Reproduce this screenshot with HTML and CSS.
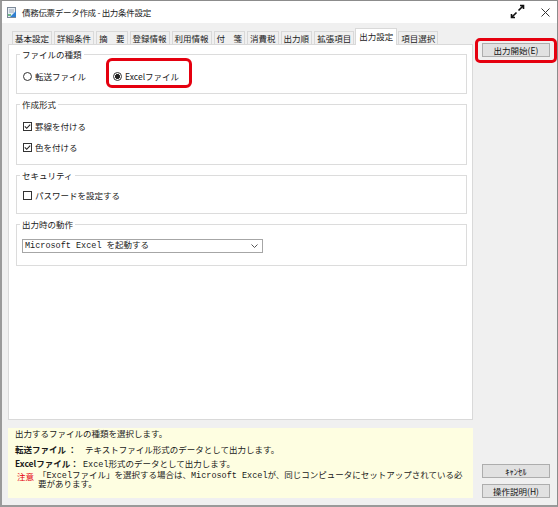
FILE: index.html
```html
<!DOCTYPE html>
<html lang="ja">
<head>
<meta charset="utf-8">
<title>債務伝票データ作成 - 出力条件設定</title>
<link rel="stylesheet" href="styles.css">
</head>
<body>
<div class="window">
  <header class="titlebar">
    <svg class="app-icon" viewBox="0 0 10 11" width="10" height="11">
      <rect x="0.5" y="0.5" width="8" height="10" fill="#e8eef5" stroke="#7d8a99"/>
      <path d="M2 3 L7 3 M2 5 L7 5" stroke="#9aa7b5" stroke-width="1"/>
      <path d="M3 10 L9 4 L9 10 Z" fill="#2f7fd0"/>
      <path d="M1 8 L4 8" stroke="#3aa35a" stroke-width="1.4"/>
    </svg>
    <span class="title">債務伝票データ作成 - 出力条件設定</span>
    <svg class="maximize" viewBox="0 0 15 15" width="15" height="15">
      <path d="M8.5 6.5 L13.5 1.5 M10 1.5 L13.5 1.5 L13.5 5 M6.5 8.5 L1.5 13.5 M1.5 10 L1.5 13.5 L5 13.5" fill="none" stroke="#111" stroke-width="1.6"/>
    </svg>
    <svg class="close" viewBox="0 0 9 9" width="9" height="9">
      <path d="M0.5 0.5 L8.5 8.5 M8.5 0.5 L0.5 8.5" stroke="#333" stroke-width="1"/>
    </svg>
  </header>

  <div class="client">
    <div class="main">
      <ul class="tabs">
        <li class="tab">基本設定</li>
        <li class="tab">詳細条件</li>
        <li class="tab">摘　要</li>
        <li class="tab">登録情報</li>
        <li class="tab">利用情報</li>
        <li class="tab">付　箋</li>
        <li class="tab">消費税</li>
        <li class="tab">出力順</li>
        <li class="tab">拡張項目</li>
        <li class="tab tab-active">出力設定</li>
        <li class="tab">項目選択</li>
      </ul>

      <div class="panel">
        <fieldset class="group group-type">
          <legend>ファイルの種類</legend>
          <div class="radio-row">
            <label class="opt"><span class="radio"></span>転送ファイル</label>
            <label class="opt highlight-radio"><span class="radio radio-checked"></span>Excelファイル</label>
          </div>
        </fieldset>

        <fieldset class="group group-format">
          <legend>作成形式</legend>
          <div class="check-list">
            <label class="opt">
              <svg class="check" viewBox="0 0 9 9" width="9" height="9"><rect x="0.5" y="0.5" width="8" height="8" fill="#fff" stroke="#333"/><path d="M1.8 4.4 L3.7 6.3 L7.2 2.6" fill="none" stroke="#222" stroke-width="1.1"/></svg>罫線を付ける
            </label>
            <label class="opt">
              <svg class="check" viewBox="0 0 9 9" width="9" height="9"><rect x="0.5" y="0.5" width="8" height="8" fill="#fff" stroke="#333"/><path d="M1.8 4.4 L3.7 6.3 L7.2 2.6" fill="none" stroke="#222" stroke-width="1.1"/></svg>色を付ける
            </label>
          </div>
        </fieldset>

        <fieldset class="group group-security">
          <legend>セキュリティ</legend>
          <label class="opt">
            <svg class="check" viewBox="0 0 9 9" width="9" height="9"><rect x="0.5" y="0.5" width="8" height="8" fill="#fff" stroke="#333"/></svg>パスワードを設定する
          </label>
        </fieldset>

        <fieldset class="group group-action">
          <legend>出力時の動作</legend>
          <div class="select">
            <span class="select-text">Microsoft Excel を起動する</span>
            <svg class="chevron" viewBox="0 0 7 4" width="7" height="4"><path d="M0.5 0.5 L3.5 3.5 L6.5 0.5" fill="none" stroke="#555" stroke-width="1"/></svg>
          </div>
        </fieldset>
      </div>

      <div class="info">
        <div class="info-line">出力するファイルの種類を選択します。</div>
        <div class="info-line"><span class="info-label label-transfer">転送ファイル ：</span>テキストファイル形式のデータとして出力します。</div>
        <div class="info-line"><span class="info-label label-excel">Excelファイル：</span>Excel形式のデータとして出力します。</div>
        <div class="info-note">
          <span class="note-label">注意</span>
          <span class="note-text">「Excelファイル」を選択する場合は、Microsoft Excelが、同じコンピュータにセットアップされている必<br>要があります。</span>
        </div>
      </div>
    </div>

    <div class="side">
      <button class="btn btn-highlight">出力開始(E)</button>
      <div class="side-bottom">
        <button class="btn">ｷｬﾝｾﾙ</button>
        <button class="btn">操作説明(H)</button>
      </div>
    </div>
  </div>
</div>
</body>
</html>
```

FILE: styles.css
```css
* { box-sizing: border-box; }

html, body {
  margin: 0;
  padding: 0;
}

body {
  width: 558px;
  height: 507px;
  overflow: hidden;
  background: #ffffff;
  font-family: "Noto Sans CJK JP", sans-serif;
  font-size: 9px;
  color: #1a1a1a;
}

.window {
  width: 558px;
  height: 507px;
  border: 1px solid #8c8c8c;
  border-left: 2px solid #9a9a9a;
  border-bottom: 2px solid #9a9a9a;
  background: #f0f0f0;
  display: flex;
  flex-direction: column;
}

/* ---------- title bar ---------- */
.titlebar {
  height: 22px;
  flex: none;
  background: #ffffff;
  display: flex;
  align-items: center;
  padding-left: 5px;
}

.app-icon { flex: none; }

.title {
  margin-left: 5px;
  font-size: 8.5px;
  letter-spacing: -0.3px;
  color: #222;
  line-height: 12px;
}

.maximize {
  margin-left: auto;
  margin-top: -2px;
}

.close {
  margin-left: 16px;
  margin-right: 7px;
}

/* ---------- client area ---------- */
.client {
  flex: 1;
  display: flex;
  gap: 9px;
  padding: 5px 7px 7px 6px;
}

.main {
  width: 465px;
  flex: none;
  display: flex;
  flex-direction: column;
}

/* tabs */
.tabs {
  list-style: none;
  margin: 0;
  padding: 0 0 0 4px;
  height: 16px;
  display: flex;
  align-items: flex-end;
  gap: 2px;
}

.tab {
  height: 13px;
  padding: 0 2px;
  border: 1px solid #d9d9d9;
  border-bottom: none;
  background: #f0f0f0;
  font-size: 8.5px;
  line-height: 12px;
  color: #1a1a1a;
  white-space: nowrap;
}

.tab-active {
  height: 17px;
  margin: 0 -1px -1px;
  padding: 0 3px;
  background: #ffffff;
  line-height: 15px;
  position: relative;
}

/* panel */
.panel {
  height: 376px;
  flex: none;
  background: #ffffff;
  border: 1px solid #d9d9d9;
  padding: 4px 5px 0 7px;
  display: flex;
  flex-direction: column;
}

.group {
  margin: 0;
  min-width: 0;
  border: 1px solid #dcdcdc;
  padding: 0 4px 0 3px;
}

.group legend {
  padding: 0 2px;
  line-height: 11px;
  font-size: 8.5px;
  color: #222;
}

.group + .group { margin-top: 5px; }

.group-type { padding-top: 10px; padding-bottom: 11px; }
.group-format { padding-top: 10px; padding-bottom: 11px; margin-top: 4px; }
.group-security { padding-top: 8px; padding-bottom: 12px; }
.group-action { padding-top: 9px; padding-bottom: 12px; }

.opt {
  display: flex;
  align-items: center;
  height: 12px;
  margin-left: 3px;
  font-size: 8.5px;
  white-space: nowrap;
}

.radio-row {
  display: grid;
  grid-template-columns: 90px auto;
  justify-content: start;
  margin-left: 3px;
}

.radio-row .opt { margin-left: 0; }

.radio {
  width: 9px;
  height: 9px;
  flex: none;
  border: 1px solid #333;
  border-radius: 50%;
  background: #fff;
  margin-right: 3px;
}

.radio-checked {
  background: radial-gradient(circle, #222 0 2.2px, #fff 2.7px);
}

.check {
  flex: none;
  margin-right: 3px;
}

.check-list {
  display: flex;
  flex-direction: column;
  gap: 9px;
}

/* red annotation marks */
.highlight-radio { position: relative; }
.highlight-radio::before {
  content: "";
  position: absolute;
  left: -7px;
  right: -13px;
  top: -12px;
  bottom: -6px;
  border: 3px solid #e5000f;
  border-radius: 6px;
}

.btn-highlight { position: relative; }
.btn-highlight::before {
  content: "";
  position: absolute;
  left: -8px;
  right: -8px;
  top: -6px;
  bottom: -7px;
  border: 3px solid #e5000f;
  border-radius: 5px;
}

/* select */
.select {
  width: 241px;
  height: 14px;
  margin-left: 2px;
  border: 1px solid #a6a6a6;
  background: #fff;
  display: flex;
  align-items: center;
  padding: 0 4px 0 2px;
}

.select-text {
  font-family: "Liberation Mono", "Noto Sans CJK JP", monospace;
  font-size: 8.5px;
  line-height: 12px;
  white-space: nowrap;
}

.chevron { margin-left: auto; }

/* info box */
.info {
  margin-top: 8px;
  height: 70px;
  flex: none;
  background: #fefee1;
  padding: 1px 6px 0 7px;
  font-family: "Liberation Mono", "Noto Sans CJK JP", monospace;
  font-size: 8.5px;
  color: #1a1a1a;
}

.info-line {
  line-height: 12px;
  white-space: nowrap;
}

.info-line:first-child { margin-bottom: 2px; }

.info-label {
  display: inline-block;
  font-family: "Noto Sans CJK JP", sans-serif;
  font-weight: bold;
}

.label-transfer { width: 70px; }
.label-excel { width: 68px; }

.info-note {
  display: flex;
  margin-top: 1px;
  line-height: 9px;
}

.note-label {
  width: 23px;
  flex: none;
  padding-left: 2px;
  font-family: "Noto Sans CJK JP", sans-serif;
  color: #e5000f;
}

.note-text {
  white-space: nowrap;
}

/* side buttons */
.side {
  width: 68px;
  flex: none;
  display: flex;
  flex-direction: column;
  justify-content: space-between;
  padding-top: 15px;
}

.side-bottom {
  display: flex;
  flex-direction: column;
  gap: 6px;
}

.btn {
  width: 68px;
  height: 14px;
  padding: 0;
  margin: 0;
  border: 1px solid #adadad;
  background: #e1e1e1;
  font-family: "Noto Sans CJK JP", sans-serif;
  font-size: 8.5px;
  line-height: 12px;
  color: #111;
}
```
